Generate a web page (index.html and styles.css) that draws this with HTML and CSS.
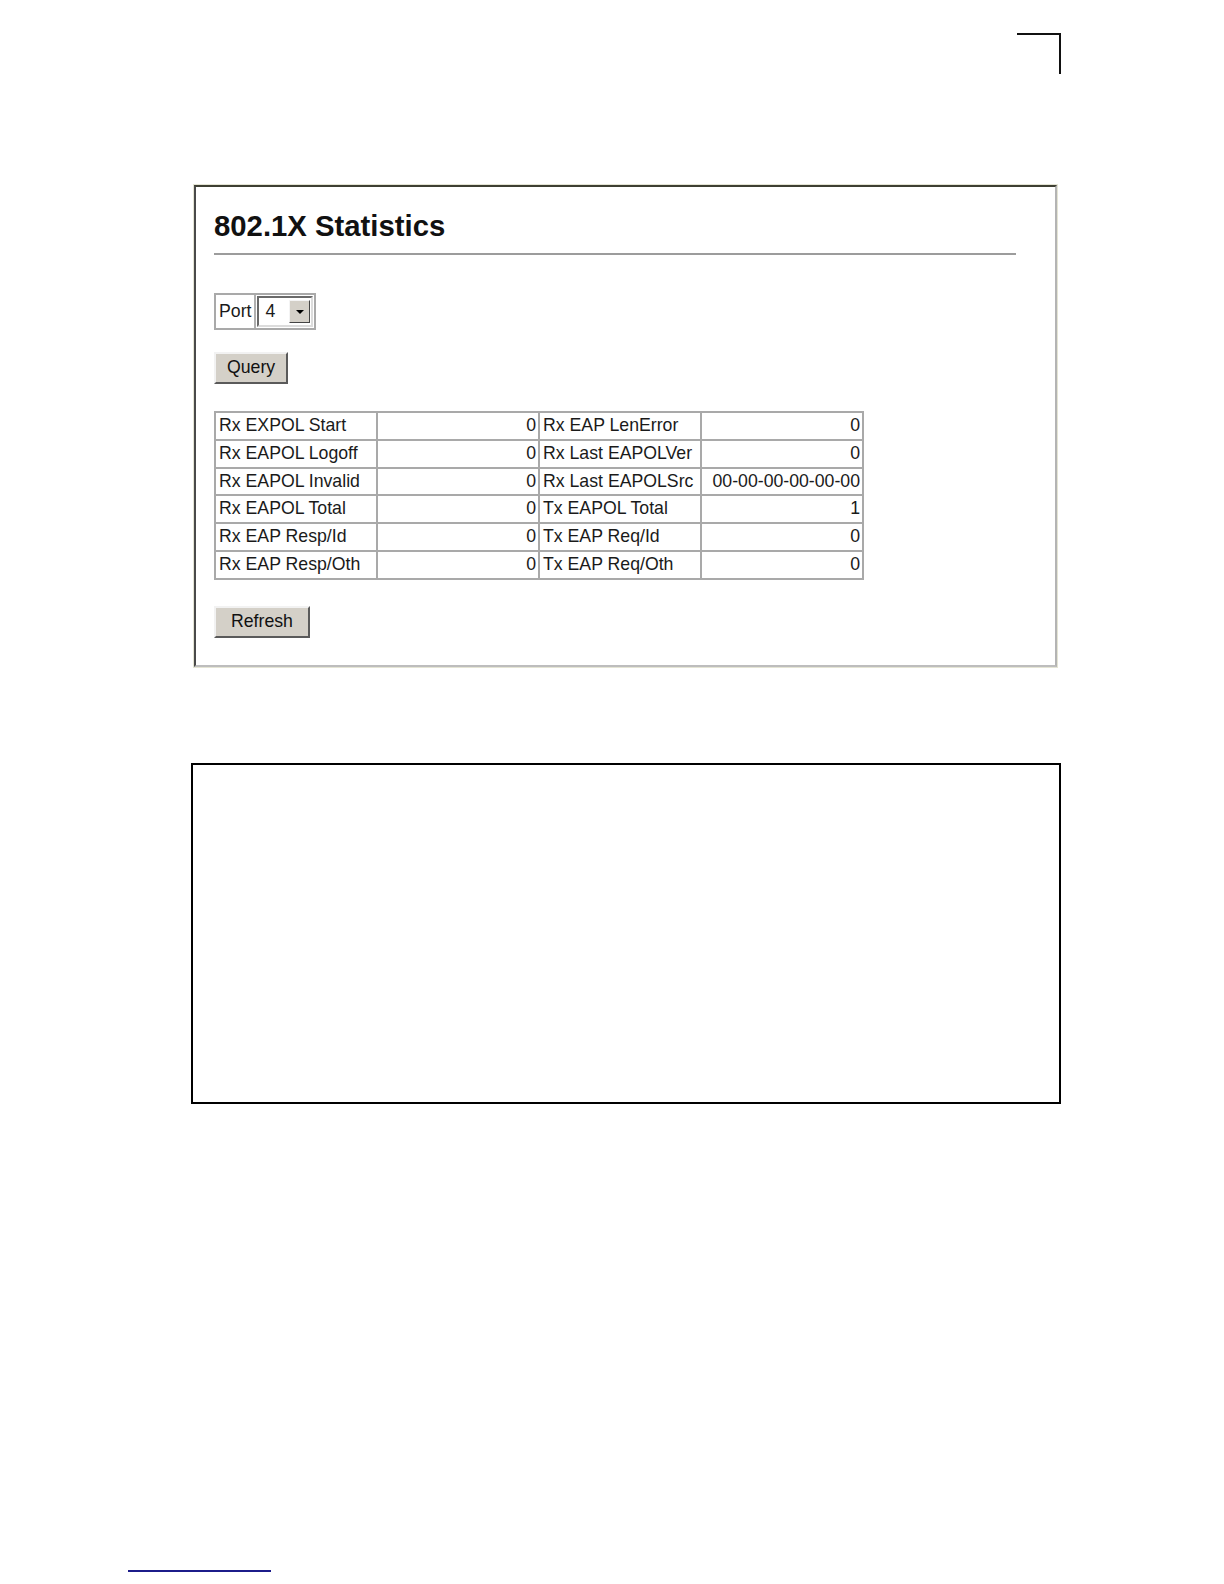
FILE: index.html
```html
<!DOCTYPE html>
<html>
<head>
<meta charset="utf-8">
<title>802.1X Statistics</title>
<link rel="stylesheet" href="styles.css">
</head>
<body>
<div class="page">
  <div class="corner-mark"></div>

  <div class="frame">
    <h1 class="title">802.1X Statistics</h1>
    <div class="rule"></div>

    <div class="port-box">
      <div class="port-label">Port</div>
      <div class="port-cell">
        <div class="select">
          <span class="select-value">4</span>
          <span class="select-btn"><span class="tri"></span></span>
        </div>
      </div>
    </div>

    <div class="btn-row btn-row-query">
      <span class="btn">Query</span>
    </div>

    <table class="stats">
      <tr><td class="lbl">Rx EXPOL Start</td><td class="val">0</td><td class="lbl">Rx EAP LenError</td><td class="val">0</td></tr>
      <tr><td class="lbl">Rx EAPOL Logoff</td><td class="val">0</td><td class="lbl">Rx Last EAPOLVer</td><td class="val">0</td></tr>
      <tr><td class="lbl">Rx EAPOL Invalid</td><td class="val">0</td><td class="lbl">Rx Last EAPOLSrc</td><td class="val">00-00-00-00-00-00</td></tr>
      <tr><td class="lbl">Rx EAPOL Total</td><td class="val">0</td><td class="lbl">Tx EAPOL Total</td><td class="val">1</td></tr>
      <tr><td class="lbl">Rx EAP Resp/Id</td><td class="val">0</td><td class="lbl">Tx EAP Req/Id</td><td class="val">0</td></tr>
      <tr><td class="lbl">Rx EAP Resp/Oth</td><td class="val">0</td><td class="lbl">Tx EAP Req/Oth</td><td class="val">0</td></tr>
    </table>

    <div class="btn-row btn-row-refresh">
      <span class="btn btn-wide">Refresh</span>
    </div>
  </div>

  <div class="blank-box"></div>

  <div class="footer-line"></div>
</div>
</body>
</html>
```

FILE: styles.css
```css
html, body {
  margin: 0;
  padding: 0;
  background: #ffffff;
}

.page {
  font-family: "Liberation Sans", Arial, sans-serif;
  color: #1a1a1a;
  padding-top: 33px;
}

.corner-mark {
  margin-left: 1017px;
  width: 42px;
  height: 39px;
  border-top: 2px solid #111;
  border-right: 2px solid #111;
}

.frame {
  margin-top: 111px;
  margin-left: 194px;
  width: 863px;
  box-sizing: border-box;
  border-style: solid;
  border-width: 2px;
  border-top-color: #3e3f33;
  border-left-color: #4a4a4a;
  border-right-color: #b4b4b4;
  border-bottom-color: #bdbdbd;
  outline: 1px solid #e4e4d4;
  padding: 23px 0 27px 18px;
}

.title {
  margin: 0;
  font-size: 29.3px;
  line-height: 32px;
  font-weight: bold;
  color: #111;
}

.rule {
  margin-top: 11px;
  width: 802px;
  height: 2px;
  background: #9c9c9c;
}

.port-box {
  margin-top: 38px;
  display: inline-flex;
  align-items: stretch;
  border: 2px solid #a9a9a9;
  height: 37px;
  box-sizing: border-box;
}

.port-label {
  font-size: 17.7px;
  line-height: 33px;
  padding: 0 3px 0 3px;
  border-right: 2px solid #b0b0b0;
}

.port-cell {
  padding: 1px;
}

.select {
  width: 56px;
  height: 31px;
  box-sizing: border-box;
  border-style: solid;
  border-width: 2px;
  border-top-color: #6a6a6a;
  border-left-color: #6a6a6a;
  border-right-color: #dcdcdc;
  border-bottom-color: #dcdcdc;
  background: #fff;
  display: flex;
  align-items: center;
  justify-content: space-between;
  padding: 0 1px 0 6px;
}

.select-value {
  font-size: 17.7px;
  line-height: 27px;
}

.select-btn {
  width: 21px;
  height: 23px;
  box-sizing: border-box;
  background: #d4d0c8;
  border-style: solid;
  border-width: 1px;
  border-top-color: #f4f4f4;
  border-left-color: #f4f4f4;
  border-right-color: #444;
  border-bottom-color: #444;
  display: flex;
  align-items: center;
  justify-content: center;
}

.tri {
  width: 0;
  height: 0;
  border-left: 4px solid transparent;
  border-right: 4px solid transparent;
  border-top: 4px solid #000;
}

.btn-row {
  display: flex;
}

.btn-row-query {
  margin-top: 22px;
}

.btn-row-refresh {
  margin-top: 26px;
}

.btn {
  display: inline-block;
  height: 32px;
  box-sizing: border-box;
  background: #d4d0c8;
  border-style: solid;
  border-width: 2px;
  border-top-color: #f2f2f2;
  border-left-color: #f2f2f2;
  border-right-color: #5a5a5a;
  border-bottom-color: #5a5a5a;
  font-size: 17.7px;
  line-height: 27px;
  padding: 0 11px;
  color: #111;
}

.btn-wide {
  padding: 0 15px;
}

.stats {
  margin-top: 27px;
  border-collapse: collapse;
  table-layout: fixed;
  width: 650px;
  border: 2px solid #a9a9a9;
}

.stats td {
  border: 2px solid #a9a9a9;
  font-size: 17.7px;
  line-height: 25.8px;
  height: 25.8px;
  padding: 0 2px 0 3px;
  white-space: nowrap;
  overflow: hidden;
}

.stats .val {
  text-align: right;
}

.blank-box {
  margin-top: 96px;
  margin-left: 191px;
  width: 870px;
  height: 341px;
  box-sizing: border-box;
  border: 2px solid #000;
}

.footer-line {
  margin-top: 466px;
  margin-left: 128px;
  width: 143px;
  height: 2px;
  background: #1c1c8a;
}
```
